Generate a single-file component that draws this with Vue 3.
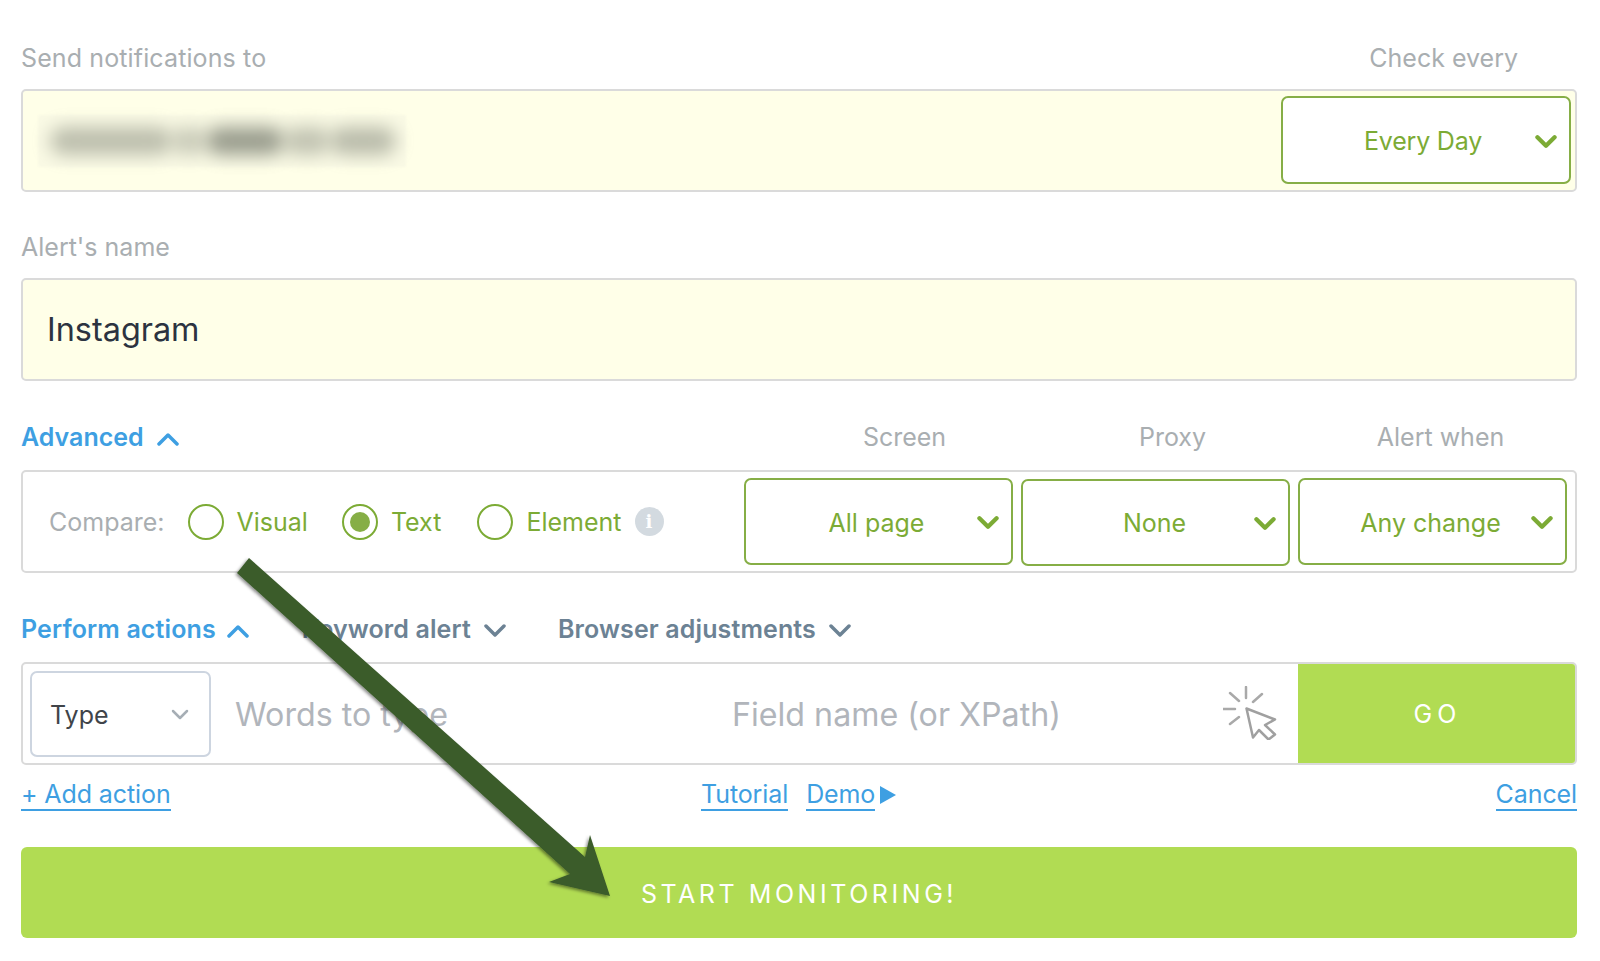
<script setup>
const smudges = [
  { w: 122, o: 0.5 }, { w: 34, o: 0.4 }, { w: 78, o: 0.78 }, { w: 46, o: 0.46 }, { w: 66, o: 0.52 }
]
const compareOptions = [
  { name: 'Visual', on: false },
  { name: 'Text', on: true },
  { name: 'Element', on: false }
]
const selects = ['All page', 'None', 'Any change']
const columnLabels = ['Screen', 'Proxy', 'Alert when']
</script>

<template>
  <main class="page">
    <div class="label-row first">
      <span class="label send">Send notifications to</span>
      <span class="label check">Check every</span>
    </div>
    <div class="box yellow email-box">
      <div class="redacted" aria-hidden="true">
        <i v-for="(s, n) in smudges" :key="n" :style="{ width: s.w + 'px', opacity: s.o }"></i>
      </div>
      <div class="select every">
        <span class="select-text">Every Day</span>
        <svg class="chev" viewBox="0 0 20 14"><path d="M2 3l8 8 8-8" /></svg>
      </div>
    </div>

    <div class="label-row second"><span class="label">Alert's name</span></div>
    <div class="box yellow name-box">Instagram</div>

    <div class="label-row third">
      <div class="toggle blue">
        Advanced
        <svg class="mini" viewBox="0 0 22 14"><path d="M2 12l9-9 9 9" /></svg>
      </div>
      <div class="col-labels">
        <span v-for="c in columnLabels" :key="c" class="label">{{ c }}</span>
      </div>
    </div>
    <div class="box compare-box">
      <div class="compare">
        <span class="compare-title">Compare:</span>
        <label v-for="o in compareOptions" :key="o.name" class="radio" :class="o.name.toLowerCase()">
          <span class="dot" :class="{ on: o.on }"></span>{{ o.name }}
        </label>
        <span class="info">i</span>
      </div>
      <div class="select-group">
        <div v-for="s in selects" :key="s" class="select small" :class="{ low: s === 'None' }">
          <span class="select-text">{{ s }}</span>
          <svg class="chev" viewBox="0 0 20 14"><path d="M2 3l8 8 8-8" /></svg>
        </div>
      </div>
    </div>

    <div class="label-row fourth">
      <div class="toggle blue perform">
        Perform actions
        <svg class="mini" viewBox="0 0 22 14"><path d="M2 12l9-9 9 9" /></svg>
      </div>
      <div class="toggle slate keyword">
        Keyword alert
        <svg class="mini" viewBox="0 0 22 14"><path d="M2 2l9 9 9-9" /></svg>
      </div>
      <div class="toggle slate browser">
        Browser adjustments
        <svg class="mini" viewBox="0 0 22 14"><path d="M2 2l9 9 9-9" /></svg>
      </div>
    </div>
    <div class="box action-box">
      <div class="type-select">
        <span>Type</span>
        <svg viewBox="0 0 18 12"><path d="M2 2l7 7 7-7" /></svg>
      </div>
      <span class="placeholder words">Words to type</span>
      <span class="placeholder field">Field name (or XPath)</span>
      <svg class="picker" viewBox="0 0 54 54">
        <g class="rays">
          <path d="M23 1v11M7 7l9 8M0 23h12M7 38l9-7M39 8l-9 8" />
        </g>
        <path class="pointer" d="M23.5 22.5L52 33.5 42 39l10 9.500-6.500 5L36 44l-6 7.500z" />
      </svg>
      <button class="go">GO</button>
    </div>

    <div class="links">
      <a class="link">+ Add action</a>
      <div class="mid-links">
        <a class="link">Tutorial</a>
        <a class="link demo">Demo</a>
        <svg class="play" viewBox="0 0 16 18"><path d="M0 0l16 9-16 9z" /></svg>
      </div>
      <a class="link cancel">Cancel</a>
    </div>

    <button class="start">START MONITORING!</button>

    <svg class="arrow" viewBox="0 0 1600 961" aria-hidden="true">
      <defs>
        <filter id="arrowShadow" x="-10%" y="-10%" width="120%" height="120%">
          <feDropShadow dx="-1.500" dy="1.500" stdDeviation="1.500" flood-color="#000" flood-opacity="0.45" />
        </filter>
      </defs>
      <path
        d="M249 558L585 857 590 835 610 896 549 882 570 874 237 573z"
        fill="#3b5b2b"
        filter="url(#arrowShadow)"
      />
    </svg>
  </main>
</template>

<style>
html, body { margin: 0; background: #fff; }
</style>

<style scoped>
.page {
  position: relative;
  box-sizing: border-box;
  width: 1600px;
  height: 961px;
  padding: 0 23px 0 21px;
  overflow: hidden;
  font-family: Inter, "Liberation Sans", sans-serif;
}
.label-row {
  display: flex;
  align-items: center;
  height: 30px;
  margin-bottom: 16px;
  position: relative;
}
.first { margin-top: 43px; justify-content: space-between; }
.second { margin-top: 40px; }
.third { margin-top: 41px; margin-bottom: 18px; }
.fourth { margin-top: 41px; margin-bottom: 18px; }
.label { font-size: 25px; color: #a9aeb1; white-space: nowrap; }
.send { letter-spacing: 0.12px; }
.check { margin-right: 59px; }
.box {
  box-sizing: border-box;
  height: 103px;
  border: 2px solid #dadada;
  border-radius: 5px;
  display: flex;
  align-items: center;
  position: relative;
}
.yellow { background: #ffffe8; }
.email-box { padding-right: 4px; justify-content: space-between; }
.redacted {
  display: flex;
  align-items: center;
  gap: 0;
  margin-left: 15px;
  width: 368px;
  height: 52px;
  padding-left: 12px;
  box-sizing: border-box;
  background: #fafae5;
  filter: blur(1px);
}
.redacted i {
  display: block;
  height: 28px;
  border-radius: 14px;
  background: #7f8376;
  filter: blur(9px);
}
.name-box { font-size: 32.4px; color: #2c3340; padding-left: 24px; padding-bottom: 1px; }
.select {
  box-sizing: border-box;
  display: flex;
  align-items: center;
  justify-content: center;
  position: relative;
  background: #fff;
  border: 2px solid #86ae46;
  border-radius: 7px;
  color: #7cab35;
  font-size: 25px;
}
.every { width: 290px; height: 88px; margin-bottom: 2px; }
.every .select-text { margin-right: 6px; margin-top: 3px; letter-spacing: -0.2px; }
.select-text { margin-right: 8px; margin-top: 1px; }
.chev {
  position: absolute;
  right: 12px;
  top: 50%;
  width: 22px;
  height: 15px;
  margin-top: -6px;
}
.chev path, .mini path {
  fill: none;
  stroke-width: 3.500;
  stroke-linecap: round;
  stroke-linejoin: round;
}
.chev path { stroke: #7cab35; stroke-width: 4px; }
.toggle {
  display: flex;
  align-items: center;
  gap: 13px;
  font-size: 25px;
  font-weight: 600;
  white-space: nowrap;
}
.fourth .toggle { letter-spacing: 0.12px; }
.mini { width: 22px; height: 14px; margin-top: 3px; }
.blue { color: #3e9fe2; }
.blue .mini path { stroke: #3e9fe2; }
.slate { color: #6c8294; }
.slate .mini path { stroke: #6c8294; }
.perform { gap: 11px; }
.keyword { margin-left: 53px; }
.browser { margin-left: 52px; }
.col-labels {
  position: absolute;
  left: 749.500px;
  top: 0;
  display: grid;
  grid-template-columns: repeat(3, 268px);
  justify-items: center;
  line-height: 30px;
}
.compare-box { padding-right: 8px; justify-content: space-between; }
.compare {
  display: flex;
  align-items: center;
  font-size: 25px;
  padding-left: 26px;
  margin-top: 1px;
}
.compare-title { color: #a9aeb1; margin-right: 23px; }
.radio {
  display: flex;
  align-items: center;
  gap: 13px;
  color: #7cab35;
  margin-right: 34px;
}
.radio.text { margin-right: 36px; }
.radio.element { margin-right: 13px; }
.dot {
  box-sizing: border-box;
  display: block;
  width: 36px;
  height: 36px;
  border: 2px solid #7cab35;
  border-radius: 50%;
  position: relative;
}
.dot.on::after {
  content: "";
  position: absolute;
  inset: 6px;
  border-radius: 50%;
  background: #86ae46;
}
.info {
  display: flex;
  align-items: center;
  justify-content: center;
  width: 29px;
  height: 29px;
  margin-top: -1px;
  border-radius: 50%;
  background: #d3dae0;
  color: #fff;
  font-family: "DejaVu Serif", serif;
  font-weight: 700;
  font-size: 18px;
}
.select-group { display: flex; align-items: flex-start; gap: 8px; }
.select.small { width: 269px; height: 87px; }
.select.small .select-text { margin-right: 4px; margin-top: 3px; }
.select.low { margin-top: 1px; }
.select.low .select-text { margin-right: 2px; margin-top: 1px; }
.action-box { padding-left: 7px; overflow: hidden; }
.type-select {
  box-sizing: border-box;
  width: 181px;
  height: 86px;
  flex: none;
  display: flex;
  align-items: center;
  justify-content: space-between;
  padding: 2px 20px 0 18px;
  border: 2px solid #cdd5e0;
  border-radius: 7px;
  color: #404449;
  font-size: 25px;
}
.type-select svg { width: 18px; height: 12px; }
.type-select path {
  fill: none;
  stroke: #a6aeb5;
  stroke-width: 2.500;
  stroke-linecap: round;
  stroke-linejoin: round;
}
.placeholder { font-size: 32.2px; color: #b1b5bb; white-space: nowrap; padding-top: 2px; }
.words { margin-left: 24px; width: 497px; flex: none; }
.field { width: 490px; flex: none; }
.picker { position: absolute; left: 1200px; top: 22px; width: 54px; height: 54px; }
.rays path { fill: none; stroke: #a9a9a9; stroke-width: 2.500; stroke-linecap: round; }
.pointer { fill: #fff; stroke: #a0a0a0; stroke-width: 2.500; stroke-linejoin: round; }
.go {
  position: absolute;
  right: -2px;
  top: -1px;
  width: 279px;
  height: 102px;
  border: 0;
  border-radius: 0 5px 5px 0;
  background: #b1dc53;
  color: #fff;
  font: 400 25px Inter, "Liberation Sans", sans-serif;
  letter-spacing: 5px;
}
.links {
  display: grid;
  grid-template-columns: 680px auto 1fr;
  height: 30px;
  margin-top: 14px;
  font-size: 25px;
  letter-spacing: -0.1px;
  color: #3e9fe2;
}
.link {
  display: inline-block;
  line-height: 30px;
  height: 30px;
  border-bottom: 2px solid #3e9fe2;
  white-space: nowrap;
  justify-self: start;
}
.mid-links { display: flex; align-items: flex-start; gap: 18px; }
.demo { margin-right: -13px; }
.play { width: 16px; height: 18px; margin-top: 7px; }
.play path { fill: #3e9fe2; }
.cancel { justify-self: end; }
.start {
  display: block;
  width: 100%;
  height: 91px;
  margin-top: 38px;
  padding: 2px 0 0 0;
  border: 0;
  border-radius: 6px;
  background: #b1dc53;
  color: #fff;
  font: 400 25px Inter, "Liberation Sans", sans-serif;
  letter-spacing: 3.550px;
}
.arrow {
  position: absolute;
  left: 0;
  top: 0;
  width: 1600px;
  height: 961px;
  pointer-events: none;
}
</style>
